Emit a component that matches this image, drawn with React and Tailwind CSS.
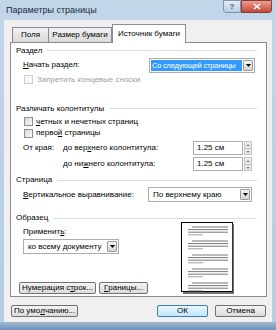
import React from 'react';

const Check = ({ disabled }) => (
  <span
    className={`block shrink-0 w-[9px] h-[9px] border ${
      disabled ? 'border-[#cfcfcf] bg-[#f6f6f6]' : 'border-[#8f8f8f] bg-gradient-to-br from-[#d6d6d6] to-[#fbfbfb]'
    }`}
  />
);

const Arrow = () => (
  <svg width="5" height="3" viewBox="0 0 5 3">
    <path d="M0 0H5L2.5 3Z" fill="#000" />
  </svg>
);

const Combo = ({ text, w, selected }) => (
  <div className={`flex shrink-0 h-[15px] border border-[#abadb3] bg-white p-[1px] ${w}`}>
    <div className="flex-1 min-w-0 flex items-center overflow-hidden">
      {selected ? (
        <span className="bg-[#3399ff] text-white h-full w-full flex items-center pl-[1px] text-[7.5px] tracking-[-0.2px]">{text}</span>
      ) : (
        <span className="pl-[3px]">{text}</span>
      )}
    </div>
    <div className="w-[10px] shrink-0 ml-[1px] border border-[#9a9a9a] rounded-[1px] bg-gradient-to-b from-[#f4f4f4] to-[#d4d4d4] flex items-center justify-center">
      <Arrow />
    </div>
  </div>
);

const Spin = () => (
  <div className="flex shrink-0 items-stretch h-[14px]">
    <div className="w-[50px] border border-[#abadb3] bg-white flex items-center pl-[3px]">1.25 см</div>
    <div className="w-[8px] ml-[1px] flex flex-col border border-[#c3c3c3] bg-[#ececec]">
      <div className="flex-1 flex items-center justify-center border-b border-[#c3c3c3]">
        <svg width="4" height="2"><path d="M0 2H4L2 0Z" fill="#8a8a8a" /></svg>
      </div>
      <div className="flex-1 flex items-center justify-center">
        <svg width="4" height="2"><path d="M0 0H4L2 2Z" fill="#8a8a8a" /></svg>
      </div>
    </div>
  </div>
);

const Section = ({ title, className = '' }) => (
  <div className={`flex items-center h-[12px] pl-[5px] pr-[9px] ${className}`}>
    <span>{title}</span>
    <div className="flex-1 h-px bg-[#d5dfe5] ml-[5px]" />
  </div>
);

const Btn = ({ children, w, primary }) => (
  <div
    className={`h-[12px] shrink-0 flex items-center justify-center rounded-[2px] border ${
      primary ? 'border-[#3c7fb1] bg-gradient-to-b from-[#eaf6fd] to-[#bee6fd]' : 'border-[#707070] bg-gradient-to-b from-[#f4f4f4] to-[#dcdcdc]'
    } ${w}`}
  >
    {children}
  </div>
);

const Preview = () => {
  const groups = [5, 19, 33, 47, 61];
  return (
    <svg width="54" height="72" viewBox="0 0 54 72">
      <rect x="0.5" y="0.5" width="51" height="69" fill="#fff" stroke="#000" />
      <path d="M52 2V71H2" stroke="#444" strokeWidth="1.5" fill="none" />
      {groups.map((y) => (
        <g key={y} stroke="#555" strokeWidth="0.8">
          <line x1="11" y1={y} x2="47" y2={y} />
          <line x1="7" y1={y + 2.6} x2="47" y2={y + 2.6} />
          <line x1="7" y1={y + 5.2} x2="47" y2={y + 5.2} />
          <line x1="7" y1={y + 7.8} x2="22" y2={y + 7.8} stroke="#888" />
        </g>
      ))}
    </svg>
  );
};

export default function App() {
  return (
    <div className="w-[276px] h-[330px] flex flex-col bg-gradient-to-b from-[#c2d6ea] to-[#b5cce2] font-['Liberation_Sans',Arial,sans-serif] text-[8px] text-black leading-none whitespace-nowrap overflow-hidden">
      {/* title bar */}
      <div className="h-[20px] flex items-start">
        <div className="flex-1 pl-[6px] pt-[6px] text-[9px] text-[#1a2a3a]">Параметры страницы</div>
        <div className="w-[18px] h-[13px] border border-[#7e94ad] rounded-bl-[3px] bg-gradient-to-b from-[#e4eef7] to-[#b9cde0] flex items-center justify-center text-[8px] font-bold text-[#4a5f77]">
          ?
        </div>
        <div className="w-[31px] h-[13px] border border-[#8c3a32] rounded-br-[3px] bg-gradient-to-b from-[#e8a190] to-[#c7433a] flex items-center justify-center mr-[4px]">
          <svg width="8" height="7" viewBox="0 0 8 7">
            <path d="M1 1L7 6M7 1L1 6" stroke="#fff" strokeWidth="1.6" />
          </svg>
        </div>
      </div>

      {/* client */}
      <div className="ml-[4px] w-[268px] h-[302px] bg-[#f0f0f0] flex flex-col">
        {/* tabs */}
        <div className="flex items-end h-[22px] pl-[8px]">
          <div className="w-[37px] h-[15px] border border-[#898c95] border-b-0 bg-gradient-to-b from-[#f2f2f2] to-[#dadada] flex items-center justify-center">
            Поля
          </div>
          <div className="w-[63px] h-[15px] border border-[#898c95] border-b-0 border-l-0 bg-gradient-to-b from-[#f2f2f2] to-[#dadada] flex items-center justify-center">
            Размер бумаги
          </div>
          <div className="w-[74px] h-[19px] -mb-px border border-[#898c95] border-b-0 bg-white flex items-center justify-center relative z-10 pb-[1px]">
            Источник бумаги
          </div>
        </div>

        {/* panel */}
        <div className="ml-[6px] w-[257px] h-[255px] border border-[#898c95] bg-white flex flex-col">
          <Section title="Раздел" className="mt-[2px]" />
          <div className="flex items-center h-[15px] mt-[1px] pl-[12px]">
            <span className="w-[126px] shrink-0">
              <u>Н</u>ачать раздел:
            </span>
            <Combo text="Со следующей страницы" w="w-[106px]" selected />
          </div>
          <div className="flex items-center h-[12px] mt-[1px] pl-[13px] gap-[4px] text-[#a0a0a0]">
            <Check disabled />
            <span>Запретить концевые сноски</span>
          </div>

          <Section title="Различать колонтитулы" className="mt-[17px]" />
          <div className="flex items-center h-[12px] mt-[1px] pl-[13px] gap-[3px]">
            <Check />
            <span>
              <u>ч</u>етных и нечетных страниц
            </span>
          </div>
          <div className="flex items-center h-[12px] pl-[13px] gap-[3px]">
            <Check />
            <span>
              перво<u>й</u> страницы
            </span>
          </div>
          <div className="flex items-center h-[14px] mt-[2px] pl-[12px]">
            <span className="w-[40px] shrink-0">От края:</span>
            <span className="w-[130px] shrink-0">
              до вер<u>х</u>него колонтитула:
            </span>
            <Spin />
          </div>
          <div className="flex items-center h-[14px] mt-[2px] pl-[12px]">
            <span className="w-[40px] shrink-0" />
            <span className="w-[130px] shrink-0">
              до ни<u>ж</u>него колонтитула:
            </span>
            <Spin />
          </div>

          <Section title="Страница" className="mt-[3px]" />
          <div className="flex items-center h-[15px] mt-[1px] pl-[12px]">
            <span className="w-[125px] shrink-0">
              <u>В</u>ертикальное выравнивание:
            </span>
            <Combo text="По верхнему краю" w="w-[104px]" />
          </div>

          <Section title="Образец" className="mt-[10px]" />
          <div className="flex flex-1 pb-[2px]">
            <div className="w-[170px] shrink-0 pl-[8px] flex flex-col">
              <div className="ml-[4px] mt-[2px] h-[12px] flex items-center">
                Применит<u>ь</u>:
              </div>
              <div className="ml-[4px] mt-[1px]">
                <Combo text="ко всему документу" w="w-[96px]" />
              </div>
              <div className="mt-auto flex gap-[3px]">
                <Btn w="w-[77px]">
                  Нумерация с<u>т</u>рок...
                </Btn>
                <Btn w="w-[49px]">
                  <u>Г</u>раницы...
                </Btn>
              </div>
            </div>
            <div className="-mt-[2px]">
              <Preview />
            </div>
          </div>
        </div>

        {/* dialog buttons */}
        <div className="flex items-center mt-[8px] pl-[7px] pr-[6px]">
          <Btn w="w-[67px]">
            По умо<u>л</u>чанию...
          </Btn>
          <div className="flex-1" />
          <Btn w="w-[51px]" primary>
            ОК
          </Btn>
          <div className="w-[7px]" />
          <Btn w="w-[51px]">Отмена</Btn>
        </div>
      </div>
      <div className="flex-1 bg-gradient-to-b from-[#9fbad6] to-[#6f92b8]" />
    </div>
  );
}
